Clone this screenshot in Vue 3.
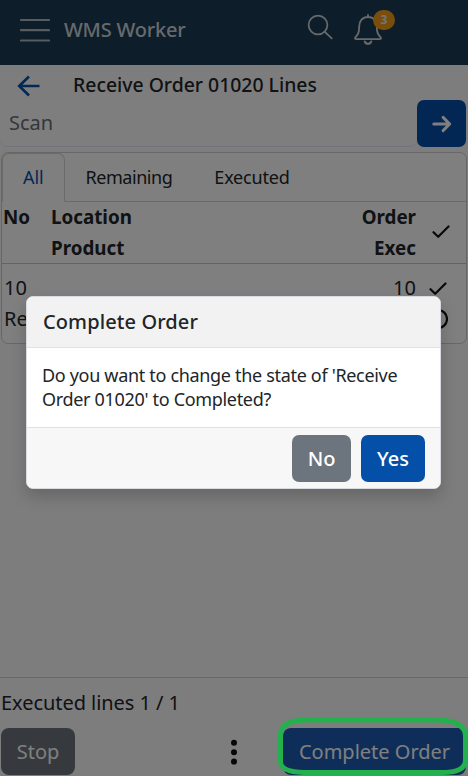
<script setup>
import { ref } from 'vue'
const tabs = ['All', 'Remaining', 'Executed']
const active = ref('All')
const open = ref(true)
</script>

<template>
  <div class="screen">
    <header class="topbar">
      <svg class="menu" width="30" height="26" viewBox="0 0 30 26"><path d="M1 3H29M1 13.2H29M1 23.5H29" /></svg>
      <span class="brand">WMS Worker</span>
      <svg class="search" width="26" height="26" viewBox="0 0 26 26"><circle cx="11" cy="11" r="9.4" /><path d="M17.6 17.6L24.7 24.4" /></svg>
      <div class="bellwrap">
        <svg width="28" height="32" viewBox="0 0 28 32"><path d="M14 1V3M14 3C8.5 3 5.2 7.1 5.2 12.4C5.2 19 3.8 20.6 1.6 23.1C.6 24.3 1 25.1 2.5 25.1H25.5C27 25.1 27.4 24.3 26.4 23.1C24.2 20.6 22.8 19 22.8 12.4C22.8 7.1 19.5 3 14 3Z" /><path d="M10.8 27.5C11.3 30.5 16.7 30.5 17.2 27.5" stroke-width="2" /></svg>
        <span class="badge">3</span>
      </div>
    </header>
    <div class="titlebar">
      <svg width="24" height="22" viewBox="0 0 24 22"><path d="M12 1.5L2.2 11L12 20.5M2.5 11H22.5" /></svg>
      <h1>Receive Order 01020 Lines</h1>
    </div>
    <div class="scanrow">
      <input placeholder="Scan" />
      <button class="go" aria-label="Submit">
        <svg width="20" height="18" viewBox="0 0 20 18"><path d="M11.1 2.4L17.7 9L11.1 15.6M1.8 9H17.2" /></svg>
      </button>
    </div>
    <section class="card">
      <nav class="tabs">
        <button v-for="t in tabs" :key="t" :class="{ on: t === active }" @click="active = t"><span>{{ t }}</span></button>
      </nav>
      <div class="row head">
        <div>No</div>
        <div>Location<br />Product</div>
        <div class="num">Order<br />Exec</div>
        <svg class="check" width="18" height="14" viewBox="0 0 18 14"><path d="M1.5 7.2L6.2 11.8L16.5 1.5" /></svg>
      </div>
      <div class="row item">
        <div class="desc">10<br />Re</div>
        <div class="num">10</div>
        <div class="marks">
          <svg width="20" height="14" viewBox="0 0 18 14"><path d="M1.5 7.2L6.2 11.8L16.5 1.5" /></svg>
          <svg width="20" height="20" viewBox="0 0 20 20"><circle cx="10" cy="10" r="9" /></svg>
        </div>
      </div>
    </section>
    <footer>
      <p>Executed lines 1 / 1</p>
      <div class="actions">
        <button class="stop">Stop</button>
        <svg width="8" height="26" viewBox="0 0 8 26"><circle cx="4" cy="3.8" r="3" /><circle cx="4" cy="13.2" r="3" /><circle cx="4" cy="22.6" r="3" /></svg>
        <button class="complete">Complete Order</button>
      </div>
    </footer>

    <div v-if="open" class="backdrop">
      <div class="modal" role="dialog">
        <h2>Complete Order</h2>
        <p>Do you want to change the state of 'Receive Order 01020' to Completed?</p>
        <div class="choices">
          <button class="no" @click="open = false">No</button>
          <button class="yes" @click="open = false">Yes</button>
        </div>
      </div>
    </div>
    <svg class="marker" width="190" height="60" viewBox="0 0 190 60"><path d="M2.5 46V19C2.5 9 12 4 28 4H160C177 4 187.5 10 187.5 20V44C187.5 53 178 56.5 164 56.5H26C10 56 2.5 52 2.5 46Z" /></svg>
  </div>
</template>

<style>
body { margin: 0; overflow: hidden; }
</style>

<style scoped>
* { box-sizing: border-box; }
.screen { position: relative; width: 468px; height: 776px; display: flex; flex-direction: column; overflow: hidden; background: #fcfbfd; color: #212529; font: 20px/31px "Noto Sans", sans-serif; }
svg { fill: none; stroke-linecap: round; stroke-linejoin: round; flex: none; }
button { font: inherit; border: 0; padding: 0; color: #fff; }
.topbar { height: 65px; background: #1a3a52; display: flex; align-items: flex-start; }
.menu { margin: 17px 0 0 20px; stroke: #b0b8be; stroke-width: 2.2; }
.brand { margin: 14px 0 0 14px; width: 143px; color: #ced4da; font-weight: 500; letter-spacing: -.2px; white-space: nowrap; }
.search { margin: 14px 0 0 100px; stroke: #d0d6dc; stroke-width: 1.7; }
.bellwrap { position: relative; margin: 14px 0 0 21px; height: 32px; }
.bellwrap svg { stroke: #d0d6dc; stroke-width: 1.8; }
.badge { position: absolute; left: 19px; top: -4px; width: 22px; height: 20px; border-radius: 10px; background: #f39b18; color: #e8e8e8; font-size: 12px; line-height: 20px; font-weight: 700; text-align: center; }
.titlebar { height: 35px; display: flex; align-items: center; padding: 6px 0 0 17px; gap: 32px; }
.titlebar svg { stroke: #0550a8; stroke-width: 2.6; stroke-linecap: butt; stroke-linejoin: miter; }
h1 { margin: -2px 0 0; font-size: 19.4px; font-weight: 500; white-space: nowrap; }
.scanrow { height: 47px; display: flex; padding-right: 2px; }
input { flex: 1; min-width: 0; border: 0; border-bottom: 1px solid #e2e6f4; border-radius: 7px; padding: 0 9px 2px; background: #fbfdfb; font: inherit; }
input::placeholder { color: #6a6e72; opacity: 1; }
.go { width: 49px; border-radius: 7px; background: #044fa8; display: flex; align-items: center; justify-content: center; }
.go svg { stroke: #fff; stroke-width: 3; }
.card { margin: 5px 1px 0; height: 192px; border: 1px solid #cfcfd1; border-radius: 7px; background: #fff; display: flex; flex-direction: column; }
.tabs { height: 49px; display: flex; flex: none; border-bottom: 1px solid #d3d4d6; }
.tabs button { height: 49px; padding: 0 20px; background: none; border: 1px solid transparent; border-radius: 7px 7px 0 0; color: #212529; font-size: 18px; letter-spacing: -.45px; }
.tabs button:last-child { letter-spacing: -.2px; }
.tabs button.on { letter-spacing: -.1px; color: #044fa8; background: #fff; border-color: #d3d4d6 #d3d4d6 #fff; }
.row { display: flex; }
.head { height: 62px; flex: none; border-bottom: 1px solid #c6c7c8; font-size: 18.8px; font-weight: 700; padding-left: 1px; }
.head > div:first-child { width: 48px; }
.num { margin-left: auto; width: 80px; text-align: right; }
.head .check { margin: 23px 16px 0; }
.check, .marks svg { stroke: #101112; stroke-width: 2.2; }
.item { padding: 8px 18px 0 2px; }
.marks { margin-left: 10px; width: 22px; display: flex; flex-direction: column; align-items: flex-end; gap: 13px; padding-top: 10px; }
footer { margin-top: auto; height: 99px; border-top: 1px solid #ceced1; }
footer p { margin: 9px 0 10px 1px; letter-spacing: -.05px; }
.actions { display: flex; align-items: center; height: 47px; padding: 0 2px 0 1px; }
.actions svg { margin: 0 45px 0 155px; fill: #111; }
.stop { width: 74px; height: 47px; border-radius: 8px; background: #6c757d; }
.complete { flex: 1; height: 47px; border-radius: 8px; background: #1d5cb2; white-space: nowrap; }
.backdrop { position: absolute; inset: 0; background: rgba(0, 0, 0, .5); padding: 296px 27px 0 26px; }
.modal { height: 193px; overflow: hidden; background: #fff; border: 1px solid #d7dade; border-radius: 7px; box-shadow: 0 8px 16px rgba(0, 0, 0, .18); }
h2 { margin: 0; height: 51px; padding: 0 16px; border-bottom: 1px solid #dee2e6; background: #f2f2f2; font-size: 20px; line-height: 50px; font-weight: 500; letter-spacing: .1px; }
.modal p { margin: 0; height: 79px; padding: 15px 15px; font-size: 18px; line-height: 24px; letter-spacing: -.32px; }
.choices { height: 61px; border-top: 1px solid #dee2e6; background: #f7f7f7; padding: 7px 15px 0; display: flex; justify-content: flex-end; gap: 10px; }
.choices button { height: 47px; padding-bottom: 1px; border-radius: 7px; font-weight: 500; }
.no { width: 59px; background: #6c757d; }
.yes { width: 64px; background: #044fa8; }
.marker { position: absolute; left: 278px; top: 716px; stroke: #22b14c; stroke-width: 5; }
</style>
